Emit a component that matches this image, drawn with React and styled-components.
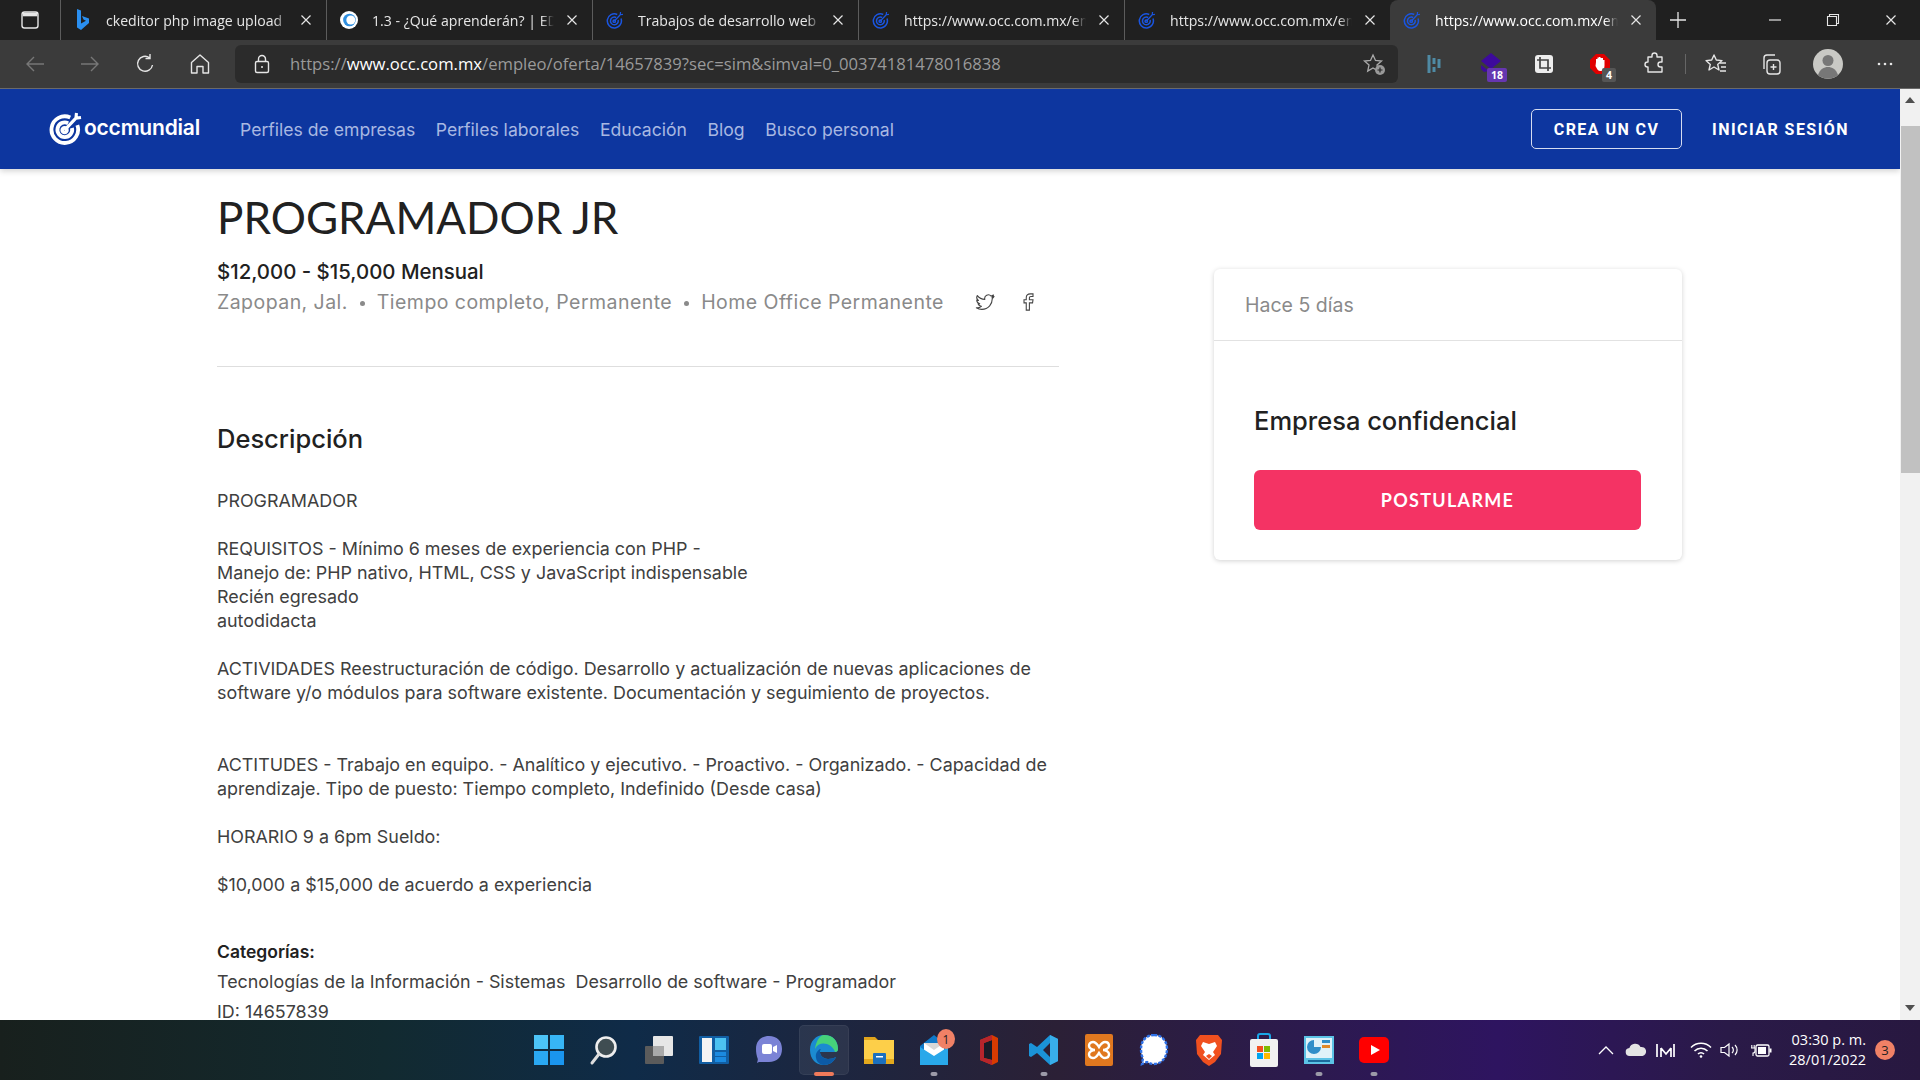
import React from 'react';
import styled, { createGlobalStyle } from 'styled-components';

const Global = createGlobalStyle`
  html, body { margin: 0; padding: 0; height: 100%; overflow: hidden; background: #fff; }
  * { box-sizing: border-box; }
`;
const UI = `"Open Sans", "Noto Sans", sans-serif`;
const LATO = `Lato, "Noto Sans", sans-serif`;
const WEB = `Inter, Lato, sans-serif`;

const Shell = styled.div`display:flex;flex-direction:column;width:1920px;height:1080px;overflow:hidden;`;
const TabBar = styled.div`display:flex;align-items:stretch;height:40px;background:#202020;flex:none;`;
const SideBtn = styled.div`width:60px;display:flex;align-items:center;justify-content:center;`;
const Tab = styled.div`
  position:relative;width:266px;height:40px;display:flex;align-items:center;padding:0 13px 0 13px;gap:14px;
  color:${p=>p.$active?'#fff':'#e6e6e6'};font:14.1px ${UI};
  background:${p=>p.$active?'#3b3b3b':'transparent'};
  border-radius:${p=>p.$active?'8px 8px 0 0':'0'};
  border-left:${p=>p.$active?'0':'1px solid #5c5c5c'};
`;
const TabIcon = styled.span`width:18px;height:18px;flex:none;display:flex;align-items:center;justify-content:center;`;
const TabTitle = styled.span`flex:1;margin-right:-3px;white-space:nowrap;overflow:hidden;-webkit-mask-image:linear-gradient(90deg,#000 93%,transparent);mask-image:linear-gradient(90deg,#000 93%,transparent);`;
const TabClose = styled.span`width:14px;height:14px;flex:none;display:flex;`;
const NewTab = styled.div`width:44px;display:flex;align-items:center;justify-content:center;`;
const WinControls = styled.div`margin-left:auto;display:flex;`;
const WinBtn = styled.div`width:58px;display:flex;align-items:center;justify-content:center;`;

const ToolBar = styled.div`display:flex;align-items:center;height:49px;background:#3b3b3b;border-bottom:1px solid #6a6a6a;padding-bottom:1px;flex:none;`;
const ToolBtn = styled.div`width:${p=>p.$w||55}px;height:38px;padding-left:${p=>p.$pl||0}px;display:flex;align-items:center;justify-content:center;position:relative;flex:none;`;
const Address = styled.div`width:1163px;height:38px;margin-left:8px;background:#2b2b2b;border-radius:6px;display:flex;align-items:center;padding:0 2px 0 18px;flex:none;`;
const Url = styled.span`margin-left:19px;font:16.65px ${UI};color:#9a9a9a;white-space:nowrap;flex:1;b{font-weight:400;color:#fff;}`;
const ToolSep = styled.div`width:1px;height:20px;background:#666;flex:none;`;
const CountBadge = styled.span`
  position:absolute;right:${p=>p.$r}px;bottom:1px;height:14px;width:${p=>p.$min}px;border-radius:2px;background:${p=>p.$bg};
  color:#fff;font:700 10.5px ${UI};line-height:14px;text-align:center;
`;

const Viewport = styled.div`flex:1;display:flex;min-height:0;`;
const Page = styled.div`flex:1;min-width:0;overflow:hidden;background:#fff;position:relative;`;
const Nav = styled.header`height:80px;background:#0d369f;display:flex;align-items:center;box-shadow:0 2px 6px rgba(0,0,0,.18);position:relative;padding:0 51px 0 49px;`;
const Logo = styled.div`display:flex;align-items:center;gap:1px;color:#fff;font:600 21px ${WEB};letter-spacing:-.2px;width:191px;margin-top:-3px;flex:none;`;
const NavLinks = styled.nav`display:flex;gap:20.5px;`;
const NavLink = styled.a`color:#a8b8e2;font:17.6px ${WEB};white-space:nowrap;`;
const NavRight = styled.div`margin-left:auto;display:flex;align-items:center;gap:30px;`;
const Outline = styled.a`width:151px;height:40px;border:1px solid #d5dcf0;border-radius:5px;color:#fff;display:flex;align-items:center;justify-content:center;font:700 16px Roboto,sans-serif;letter-spacing:1.45px;`;
const Plain = styled.a`color:#fff;font:700 16px Roboto,sans-serif;letter-spacing:1.45px;white-space:nowrap;`;

const Main = styled.main`display:grid;grid-template-columns:842px 468px;column-gap:155px;padding:20px 0 0 217px;`;
const Title = styled.h1`margin:0;font:400 44px/56px ${LATO};color:#212121;`;
const Salary = styled.div`margin-top:15px;font:500 20.4px/24px ${WEB};color:#212121;`;
const Meta = styled.div`margin-top:4px;height:28px;display:flex;align-items:center;font:19.5px/28px ${WEB};letter-spacing:.45px;color:#8a8a8a;white-space:nowrap;`;
const Dot = styled.span`width:5px;height:5px;border-radius:50%;background:#8a8a8a;margin:2px 12px 0 12px;flex:none;`;
const Social = styled.span`display:flex;margin-left:${p=>p.$ml}px;`;
const Rule = styled.hr`margin:50px 0 0;border:0;border-top:1px solid #dedede;`;
const Heading = styled.h2`margin:56px 0 0;font:500 25.5px/32px ${WEB};color:#212121;`;
const Body = styled.div`margin-top:34px;font:17.9px/24px ${WEB};color:#404040;white-space:nowrap;`;
const Para = styled.p`margin:0 0 ${p=>p.$gap??24}px;`;
const Cat = styled.div`font:600 17.5px/24px ${WEB};color:#212121;margin-top:43px;`;
const CatLine = styled.div`font:17.9px/24px ${WEB};color:#404040;margin-top:6px;`;

const Card = styled.aside`height:291px;margin-top:80px;background:#fff;border-radius:6px;box-shadow:0 1px 5px rgba(0,0,0,.18);display:flex;flex-direction:column;`;
const CardHead = styled.div`height:72px;padding:0 31px;display:flex;align-items:center;border-bottom:1px solid #e2e2e2;font:19.5px ${WEB};color:#8a8a8a;`;
const CardBody = styled.div`padding:62px 41px 0 40px;`;
const Company = styled.div`font:450 25.5px/36px ${WEB};color:#212121;`;
const Apply = styled.a`margin-top:31px;height:60px;display:flex;align-items:center;justify-content:center;background:#f43364;border-radius:6px;color:#fff;font:700 18px ${LATO};letter-spacing:1.3px;`;

const Scroll = styled.div`width:20px;background:#f1f1f1;display:flex;flex-direction:column;flex:none;`;
const ScrollArrow = styled.div`height:37px;padding-top:8px;display:flex;align-items:flex-start;justify-content:center;`;
const Thumb = styled.div`width:19px;height:347px;background:#c1c1c1;margin-left:1px;`;
const ScrollEnd = styled.div`margin-top:auto;height:24px;display:flex;align-items:center;justify-content:center;`;

const Taskbar = styled.footer`height:60px;flex:none;display:grid;grid-template-columns:1fr auto 1fr;align-items:center;color:#fff;
  background:linear-gradient(90deg,#18201d 0%,#122a30 20%,#0f2b48 33%,#2b2036 55%,#2c1a4e 68%,#2e1460 78%,#2a1a48 90%,#281840 100%);`;
const TaskCenter = styled.div`grid-column:2;display:flex;margin-left:2px;`;
const TaskItem = styled.div`position:relative;width:55px;height:60px;display:flex;align-items:center;justify-content:center;`;
const TaskGlyph = styled.span`display:flex;position:relative;`;
const ActiveBg = styled.span`position:absolute;left:3px;top:5px;width:50px;height:50px;border-radius:5px;background:rgba(255,255,255,.07);border:1px solid rgba(255,255,255,.05);`;
const Runner = styled.span`position:absolute;bottom:4px;left:50%;transform:translateX(-50%);height:4px;border-radius:2px;width:${p=>p.$on?'20px':'7px'};background:${p=>p.$on?'#f07a5a':'#9c9aa8'};`;
const Notif = styled.span`position:absolute;right:${p=>p.$r||6}px;top:${p=>p.$t||8}px;width:18px;height:20px;border-radius:50%;background:#f08166;color:#222;display:flex;align-items:center;justify-content:center;font:12px ${UI};`;
const Tray = styled.div`grid-column:3;justify-self:end;display:flex;align-items:center;padding-right:25px;`;
const TrayIcon = styled.span`display:flex;width:${p=>p.$w}px;justify-content:center;flex:none;svg{flex:none;}`;
const Clock = styled.div`text-align:right;font:14.5px/20px ${UI};margin-right:9px;white-space:nowrap;width:82px;`;
const ClockBadge = styled.span`width:20px;height:20px;border-radius:50%;background:#f08166;color:#222;display:flex;align-items:center;justify-content:center;font:13px ${UI};`;

/* ---------- drawings ---------- */
const X = ({c='#e6e6e6'}) => <svg width="14" height="14" viewBox="0 0 14 14"><path d="M2.500 2.500l9 9M11.500 2.500l-9 9" stroke={c} strokeWidth="1.200"/></svg>;
const Target = ({size=18,c='#1a55e0',sw=1.5}) => (
  <svg width={size} height={size} viewBox="0 0 24 24" fill="none" stroke={c} strokeWidth={sw*1.35}>
    <path d="M15 4.600A9.400 9.400 0 1 0 20 10"/><path d="M13.500 8.600A5.200 5.200 0 1 0 16.200 12"/><circle cx="11" cy="13.500" r="1.600"/><path d="M11.500 13L19 5M19 5l.4-3.600M19 5l3.600-.4" strokeWidth={sw*1.1}/>
  </svg>
);
const BingIcon = () => <svg width="14" height="22" viewBox="0 0 14 22"><path d="M1 0l4 1.500v13l5-2.700-2.500-1.200L6 7l7 2.500v4.500L5 21l-4-2.500z" fill="#2a8ff0"/></svg>;
const EdIcon = () => <svg width="20" height="20" viewBox="0 0 20 20"><circle cx="10" cy="10" r="10" fill="#fff"/><circle cx="10.500" cy="10" r="7" fill="#2f8fe0"/><circle cx="12" cy="10" r="5" fill="#fff"/></svg>;
const Ic = ({w=24,h=24,vb='0 0 24 24',children}) => <svg width={w} height={h} viewBox={vb} fill="none">{children}</svg>;

const TabsList = [
  {t:'ckeditor php image upload',i:<BingIcon/>},
  {t:'1.3 - ¿Qué aprenderán? | EDteam',i:<EdIcon/>},
  {t:'Trabajos de desarrollo web en Guadalajara',i:<Target/>},
  {t:'https://www.occ.com.mx/empleo/oferta',i:<Target/>},
  {t:'https://www.occ.com.mx/empleo/oferta',i:<Target/>},
  {t:'https://www.occ.com.mx/empleo/oferta',i:<Target/>,active:true},
];

const TaskIcons = [
  <Ic w={32} h={32} vb="0 0 32 32"><rect x="1" y="1" width="14" height="14" fill="#4cc4f7"/><rect x="17" y="1" width="14" height="14" fill="#37b5f5"/><rect x="1" y="17" width="14" height="14" fill="#2aa8f2"/><rect x="17" y="17" width="14" height="14" fill="#1a95ee"/></Ic>,
  <Ic w={32} h={32} vb="0 0 32 32"><circle cx="18" cy="13" r="9.500" fill="#3f4d52" stroke="#eee" strokeWidth="2.600"/><path d="M11 20l-7 9" stroke="#ddd" strokeWidth="3" strokeLinecap="round"/></Ic>,
  <Ic w={32} h={32} vb="0 0 32 32"><rect x="2" y="12" width="19" height="18" rx="1" fill="#5b5b5b"/><rect x="10" y="2" width="20" height="20" rx="1" fill="#e6e6e6"/><rect x="10" y="12" width="11" height="10" fill="#a9a9a9"/></Ic>,
  <Ic w={32} h={32} vb="0 0 32 32"><rect x="1" y="2" width="30" height="28" rx="1" fill="#115ea3"/><rect x="4" y="4" width="10" height="24" fill="#f3f3f3"/><rect x="17" y="4" width="11" height="12" fill="#4cc2f1"/><rect x="17" y="18" width="11" height="4" fill="#1b8ae0"/><rect x="17" y="23" width="11" height="5" fill="#1b8ae0"/></Ic>,
  <Ic w={32} h={32} vb="0 0 32 32"><path d="M16 2c8 0 13 5 13 13s-5 13-13 13H6c-1 0-1 1-2 1 .6-2 .8-3 .8-4C3.500 22 3 18 3 15 3 7 8 2 16 2z" fill="#7b83d6"/><rect x="9" y="10" width="10" height="10" rx="2" fill="#fff"/><path d="M20 13l4-2v8l-4-2z" fill="#fff"/></Ic>,
  <Ic w={32} h={34} vb="0 0 32 34"><path d="M16 2c9 0 14 6 14 14 0 1-.5 3-3 3H12c0 4 4 7 8 7 3 0 6-1 8-2-2 5-7 8-12 8C8 32 2 26 2 17 2 8 8 2 16 2z" fill="#1b8bd1"/><path d="M16 2c9 0 14 6 14 14 0 2-1 3-3 3-3-9-16-12-20-3C8 8 12 2 16 2z" fill="#46d27a"/><path d="M12 19c0 4 4 7 8 7 3 0 6-1 8-2-2 5-7 8-12 8-6 0-9-6-8-11 1-3 3-5 5-5-1 1-1 2-1 3z" fill="#0c5aa6"/></Ic>,
  <Ic w={32} h={32} vb="0 0 32 32"><path d="M1 3h11l3 3h-14z" fill="#e0a41c"/><rect x="1" y="6" width="30" height="24" fill="#fdcf49"/><rect x="1" y="25" width="30" height="5" fill="#e4a91d"/><rect x="10" y="19" width="13" height="11" rx="1" fill="#1b70bf"/><rect x="13" y="22" width="7" height="1.500" fill="#fff"/></Ic>,
  <Ic w={32} h={34} vb="0 0 32 34"><path d="M2 13L16 2l14 11v19H2z" fill="#0f79c9"/><path d="M6 10h20v10l-10 6-10-6z" fill="#fff"/><path d="M2 14l14 9 14-9v18H2z" fill="#29a8ea"/><path d="M6 10h20l-10 7z" fill="#d8d8d8"/></Ic>,
  <Ic w={26} h={32} vb="0 0 26 32"><path d="M16 1L4 6v20l12 5 6-3V4z" fill="#d83b01"/><path d="M8 9l8-3v20l-8-2z" fill="#1b1b28"/><path d="M4 6l12-5v5L8 9v15l8 2v5L4 26z" fill="#b7252c"/></Ic>,
  <Ic w={30} h={32} vb="0 0 30 32"><path d="M21 1l8 4v22l-8 4-13-12-6 4-2-1V10l2-1 6 4zM21 9l-7 7 7 7z" fill="#1b93d8"/><path d="M21 1l8 4v22l-8 4z" fill="#38aeea"/></Ic>,
  <Ic w={30} h={32} vb="0 0 30 32"><rect x="1" y="0" width="28" height="32" rx="2" fill="#e0781f"/><path d="M9 8c3 0 4 2 6 5 2-3 3-5 6-5s4 2 4 4-3 4-6 4c3 0 6 2 6 4s-1 4-4 4-4-2-6-5c-2 3-3 5-6 5s-4-2-4-4 3-4 6-4c-3 0-6-2-6-4s1-4 4-4z" stroke="#fff" strokeWidth="2.400"/></Ic>,
  <Ic w={30} h={32} vb="0 0 30 32"><path d="M15 1c8 0 13 6 13 14s-5 15-13 15c-3 0-5-1-7-2l-5 2 1-6c-1.500-2.500-2-6-2-9C2 7 7 1 15 1z" fill="#fff" stroke="#2f72e8" strokeWidth="2.400" strokeDasharray="3 1.500"/></Ic>,
  <Ic w={28} h={32} vb="0 0 28 32"><path d="M5 1h18l4 5-1 14-6 8-6 4-6-4-6-8L1 6z" fill="#f0501f"/><path d="M8 8l6 2 6-2 2 4-4 6 2 3-6 5-6-5 2-3-4-6z" fill="#fff"/><path d="M11 22l3-2 3 2-3 3z" fill="#f0501f"/></Ic>,
  <Ic w={30} h={34} vb="0 0 30 34"><path d="M9 6V3q0-2 2-2h8q2 0 2 2v3" stroke="#19a7e8" strokeWidth="2"/><rect x="1" y="6" width="28" height="28" rx="2" fill="#f1f1f1"/><rect x="8" y="13" width="6" height="6" fill="#f25022"/><rect x="15" y="13" width="6" height="6" fill="#7fba00"/><rect x="8" y="20" width="6" height="6" fill="#00a4ef"/><rect x="15" y="20" width="6" height="6" fill="#ffb900"/></Ic>,
  <Ic w={30} h={28} vb="0 0 30 28"><rect width="30" height="28" fill="#5cc3e6"/><rect x="2" y="2" width="26" height="20" fill="#dff2f9"/><path d="M10 4a7 7 0 1 0 7 7h-7z" fill="#2f8ec9"/><rect x="18" y="4" width="8" height="3" fill="#2f8ec9"/><rect x="18" y="9" width="8" height="3" fill="#e08a2a"/><rect x="4" y="24" width="22" height="2" fill="#1b6a9c"/></Ic>,
  <Ic w={30} h={26} vb="0 0 30 26"><rect width="30" height="26" rx="5" fill="#f00"/><path d="M12 8l9 5-9 5z" fill="#fff"/></Ic>,
];

export default function App() {
  return (
    <Shell>
      <Global/>
      <TabBar>
        <SideBtn><Ic w={20} h={20} vb="0 0 20 20"><rect x="2" y="2" width="16" height="16" rx="2.500" stroke="#e6e6e6" strokeWidth="1.400"/><rect x="2.700" y="2.700" width="14.600" height="3.600" fill="#e6e6e6"/></Ic></SideBtn>
        {TabsList.map((t,i)=>(
          <Tab key={i} $active={t.active}>
            <TabIcon>{t.i}</TabIcon>
            <TabTitle>{t.t}</TabTitle>
            <TabClose><X/></TabClose>
          </Tab>
        ))}
        <NewTab><Ic w={20} h={20} vb="0 0 20 20"><path d="M10 2v16M2 10h16" stroke="#e6e6e6" strokeWidth="1.300"/></Ic></NewTab>
        <WinControls>
          <WinBtn><Ic w={14} h={14} vb="0 0 14 14"><path d="M1 7h12" stroke="#e6e6e6" strokeWidth="1.200"/></Ic></WinBtn>
          <WinBtn><Ic w={14} h={14} vb="0 0 14 14"><path d="M3.500 3.500V1.500h9v9h-2M1.500 3.500h9v9h-9z" stroke="#e6e6e6" strokeWidth="1.100"/></Ic></WinBtn>
          <WinBtn><X/></WinBtn>
        </WinControls>
      </TabBar>

      <ToolBar>
        <ToolBtn $w={62} $pl={8}><Ic><path d="M21 12H4M11 5l-7 7 7 7" stroke="#777" strokeWidth="1.400"/></Ic></ToolBtn>
        <ToolBtn><Ic><path d="M3 12h17M13 5l7 7-7 7" stroke="#777" strokeWidth="1.400"/></Ic></ToolBtn>
        <ToolBtn><Ic><path d="M19.500 13a7.500 7.500 0 1 1-3-7.300M17 2v4.500h-4.500" stroke="#e6e6e6" strokeWidth="1.400"/></Ic></ToolBtn>
        <ToolBtn><Ic><path d="M12 3l8.500 7.500V21H15v-6.500H9V21H3.500V10.500z" stroke="#e6e6e6" strokeWidth="1.400" strokeLinejoin="round"/></Ic></ToolBtn>
        <Address>
          <Ic w={18} h={20} vb="0 0 18 20"><rect x="2.500" y="7.500" width="13" height="11" rx="1.500" stroke="#e6e6e6" strokeWidth="1.400"/><path d="M5.500 7.500V5a3.500 3.500 0 0 1 7 0v2.500" stroke="#e6e6e6" strokeWidth="1.400"/><circle cx="9" cy="13" r="1" fill="#e6e6e6"/></Ic>
          <Url>https://<b>www.occ.com.mx</b>/empleo/oferta/14657839?sec=sim&amp;simval=0_00374181478016838</Url>
          <ToolBtn $w={44}><Ic><path d="M11 3l2.500 5.500 6 .6-4.500 4 1.300 6-5.300-3.100-5.300 3.100 1.300-6-4.500-4 6-.6z" stroke="#aaa" strokeWidth="1.300"/><circle cx="18" cy="18" r="5" fill="#999"/><path d="M18 15.500v5M15.500 18h5" stroke="#222" strokeWidth="1.200"/></Ic></ToolBtn>
        </Address>
        <ToolBtn $w={72}><Ic w={14} h={20} vb="0 0 14 20"><path d="M2 1v18M7 4v6M7 13v5M12 5v9" stroke="#4f8aa4" strokeWidth="3"/></Ic></ToolBtn>
        <ToolBtn $w={42}><Ic w={24} h={22} vb="0 0 24 22"><path d="M12 0l10 8-10 8-10-8z" fill="#3d0a9c"/><path d="M2 12l8 6-5 1-3-3z" fill="#3d0a9c"/></Ic><CountBadge $r={5} $min={20} $bg="#6636b0">18</CountBadge></ToolBtn>
        <ToolBtn $w={64}><Ic><rect x="3" y="3" width="18" height="18" rx="3" fill="#ededed"/><path d="M8 5v11h11M5 8h11v11" stroke="#444" strokeWidth="1.700"/></Ic></ToolBtn>
        <ToolBtn $w={48}><Ic w={22} h={22} vb="0 0 22 22"><path d="M7 1h8l6 6v8l-6 6H7l-6-6V7z" fill="#e00000"/><path d="M7 9V6h1.500v-1.500H10V4h1.500v1H14v2h1.500v6c0 3-2 5-4 5-2.500 0-3.500-2-5-5z" fill="#fff"/></Ic><CountBadge $r={8} $min={14} $bg="#555">4</CountBadge></ToolBtn>
        <ToolBtn $w={61}><Ic><path d="M9 4.500a2.500 2.500 0 0 1 5 0V6h5v5h-1.500a2.500 2.500 0 0 0 0 5H19v5H5v-5h-.5a2.500 2.500 0 0 1 0-5H5V6h4z" stroke="#e6e6e6" strokeWidth="1.400" strokeLinejoin="round" transform="translate(0 -1)"/></Ic></ToolBtn>
        <ToolSep/>
        <ToolBtn $w={60}><Ic><path d="M10 3l2.300 5 5.700.6-4.300 3.800 1.300 5.600-5-3-5 3 1.300-5.600L2 8.600 7.700 8z" stroke="#e6e6e6" strokeWidth="1.400" strokeLinejoin="round"/><path d="M16 11h6M17 15h5M16 19h6" stroke="#e6e6e6" strokeWidth="1.400"/></Ic></ToolBtn>
        <ToolBtn $w={50}><Ic><rect x="8" y="8" width="13" height="14" rx="3" stroke="#e6e6e6" strokeWidth="1.400"/><path d="M5 17V6a3 3 0 0 1 3-3h8M14.500 12v6M11.500 15h6" stroke="#e6e6e6" strokeWidth="1.400"/></Ic></ToolBtn>
        <ToolBtn $w={64}><svg width="30" height="30" viewBox="0 0 30 30"><circle cx="15" cy="15" r="15" fill="#c9c9c5"/><circle cx="15" cy="11.500" r="5.500" fill="#777"/><path d="M5 26c2-6 6-8 10-8s8 2 10 8a15 15 0 0 1-20 0z" fill="#777"/></svg></ToolBtn>
        <ToolBtn $w={50}><Ic w={20} h={6} vb="0 0 20 6"><circle cx="4" cy="3" r="1.300" fill="#e6e6e6"/><circle cx="10" cy="3" r="1.300" fill="#e6e6e6"/><circle cx="16" cy="3" r="1.300" fill="#e6e6e6"/></Ic></ToolBtn>
      </ToolBar>

      <Viewport>
        <Page>
          <Nav>
            <Logo><Target size={34} c="#fff" sw={2}/><span>occmundial</span></Logo>
            <NavLinks>
              <NavLink>Perfiles de empresas</NavLink>
              <NavLink>Perfiles laborales</NavLink>
              <NavLink>Educación</NavLink>
              <NavLink>Blog</NavLink>
              <NavLink>Busco personal</NavLink>
            </NavLinks>
            <NavRight>
              <Outline>CREA UN CV</Outline>
              <Plain>INICIAR SESIÓN</Plain>
            </NavRight>
          </Nav>
          <Main>
            <section>
              <Title>PROGRAMADOR JR</Title>
              <Salary>$12,000 - $15,000 Mensual</Salary>
              <Meta>
                Zapopan, Jal.<Dot/>Tiempo completo, Permanente<Dot/>Home Office Permanente
                <Social $ml={31}><svg width="21" height="17" viewBox="0 0 24 20" fill="none"><path d="M22 3c-.8.4-1.700.6-2.500.7.900-.5 1.600-1.400 1.900-2.400-.9.500-1.800.9-2.800 1.100A4.300 4.300 0 0 0 11.200 6.300C7.700 6.100 4.500 4.400 2.400 1.800c-1.100 2-.6 4.500 1.300 5.800-.7 0-1.400-.2-2-.5 0 2.100 1.500 3.900 3.500 4.300-.6.200-1.300.2-2 .1.600 1.700 2.200 2.900 4 3-1.700 1.400-3.900 2-6 1.700 1.900 1.200 4 1.900 6.500 1.900 8 0 12.500-6.700 12.200-12.800.9-.6 1.600-1.400 2.100-2.300z" stroke="#444" strokeWidth="1.300" strokeLinejoin="round"/></svg></Social>
                <Social $ml={26}><svg width="13" height="18" viewBox="0 0 13 20" fill="none"><path d="M4 19h3.500v-8H11l.5-3.500h-4V5.500c0-1 .5-1.700 1.700-1.700H11.500V1H8.500C5.500 1 4 2.800 4 5.200v2.300H1.500V11H4z" stroke="#444" strokeWidth="1.200"/></svg></Social>
              </Meta>
              <Rule/>
              <Heading>Descripción</Heading>
              <Body>
                <Para>PROGRAMADOR</Para>
                <Para>REQUISITOS - Mínimo 6 meses de experiencia con PHP -<br/>Manejo de: PHP nativo, HTML, CSS y JavaScript indispensable<br/>Recién egresado<br/>autodidacta</Para>
                <Para $gap={48}>ACTIVIDADES Reestructuración de código. Desarrollo y actualización de nuevas aplicaciones de<br/>software y/o módulos para software existente. Documentación y seguimiento de proyectos.</Para>
                <Para>ACTITUDES - Trabajo en equipo. - Analítico y ejecutivo. - Proactivo. - Organizado. - Capacidad de<br/>aprendizaje. Tipo de puesto: Tiempo completo, Indefinido (Desde casa)</Para>
                <Para>HORARIO 9 a 6pm Sueldo:</Para>
                <Para $gap={0}>$10,000 a $15,000 de acuerdo a experiencia</Para>
                <Cat>Categorías:</Cat>
                <CatLine>Tecnologías de la Información - Sistemas&nbsp; Desarrollo de software - Programador</CatLine>
                <CatLine>ID: 14657839</CatLine>
              </Body>
            </section>
            <Card>
              <CardHead>Hace 5 días</CardHead>
              <CardBody>
                <Company>Empresa confidencial</Company>
                <Apply>POSTULARME</Apply>
              </CardBody>
            </Card>
          </Main>
        </Page>
        <Scroll>
          <ScrollArrow><svg width="10" height="6" viewBox="0 0 10 6"><path d="M5 0l5 6H0z" fill="#505050"/></svg></ScrollArrow>
          <Thumb/>
          <ScrollEnd><svg width="10" height="6" viewBox="0 0 10 6"><path d="M5 6L0 0h10z" fill="#505050"/></svg></ScrollEnd>
        </Scroll>
      </Viewport>

      <Taskbar>
        <TaskCenter>
          {TaskIcons.map((ic,i)=>(
            <TaskItem key={i}>
              {i===5 && <ActiveBg/>}
              <TaskGlyph>{ic}</TaskGlyph>
              {i===5 && <Runner $on/>}
              {[7,9,14,15].includes(i) && <Runner/>}
              {i===7 && <Notif $r={6} $t={9}>1</Notif>}
            </TaskItem>
          ))}
        </TaskCenter>
        <Tray>
          <TrayIcon $w={32}><Ic w={18} h={12} vb="0 0 18 12"><path d="M2 10l7-7 7 7" stroke="#fff" strokeWidth="1.300"/></Ic></TrayIcon>
          <TrayIcon $w={28}><Ic w={22} h={14} vb="0 0 22 14"><path d="M5 13a4 4 0 0 1-.6-8A6 6 0 0 1 15.500 4 4.500 4.500 0 0 1 17.500 13z" fill="#e4e4e4"/></Ic></TrayIcon>
          <TrayIcon $w={30}><Ic w={19} h={14} vb="0 0 19 14"><path d="M1 1v13M5 5l5 6 5-6M5 5v9M15 5v9M18 1v13" stroke="#fff" strokeWidth="1.700"/></Ic></TrayIcon>
          <TrayIcon $w={42}><Ic w={22} h={16} vb="0 0 22 16"><path d="M1 5.500a14 14 0 0 1 20 0M4.500 9a9 9 0 0 1 13 0M8 12a4 4 0 0 1 6 0" stroke="#fff" strokeWidth="1.500"/><circle cx="11" cy="14.500" r="1.300" fill="#fff"/></Ic></TrayIcon>
          <TrayIcon $w={16}><Ic w={20} h={16} vb="0 0 20 16" ><path d="M1 5.500h3.500L9 2v12L4.500 10.500H1z" stroke="#fff" strokeWidth="1.200"/><path d="M12 5a4 4 0 0 1 0 6M15 3a7 7 0 0 1 0 10" stroke="#fff" strokeWidth="1.200"/></Ic></TrayIcon>
          <TrayIcon $w={46}><Ic w={22} h={16} vb="0 0 22 16"><rect x="6" y="3" width="13" height="11" rx="1.500" stroke="#fff" strokeWidth="1.300"/><rect x="8" y="5" width="8" height="7" fill="#fff"/><rect x="19.500" y="6.500" width="2" height="4" fill="#fff"/><path d="M1 6h4v3c0 2-2 2-2 2V14M1.800 3v3M4.200 3v3" stroke="#fff" strokeWidth="1.100"/></Ic></TrayIcon>
          <Clock>03:30 p. m.<br/>28/01/2022</Clock>
          <ClockBadge>3</ClockBadge>
        </Tray>
      </Taskbar>
    </Shell>
  );
}
